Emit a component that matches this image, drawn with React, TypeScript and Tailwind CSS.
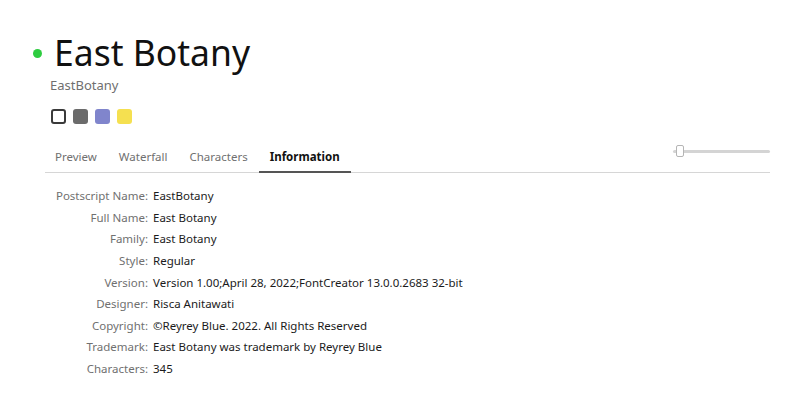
import { useState } from "react";

const info: [string, string][] = [
  ["Postscript Name", "EastBotany"],
  ["Full Name", "East Botany"],
  ["Family", "East Botany"],
  ["Style", "Regular"],
  ["Version", "Version 1.00;April 28, 2022;FontCreator 13.0.0.2683 32-bit"],
  ["Designer", "Risca Anitawati"],
  ["Copyright", "©Reyrey Blue. 2022. All Rights Reserved"],
  ["Trademark", "East Botany was trademark by Reyrey Blue"],
  ["Characters", "345"],
];

const tabs = ["Preview", "Waterfall", "Characters", "Information"];

const App = () => {
  const [currentTab, setCurrentTab] = useState<string>("Information");

  return (
    <div
      className="w-[800px] h-[416px] bg-white overflow-hidden text-[#1b1b1b]"
      style={{ fontFamily: '"Segoe UI", "Noto Sans", "Open Sans", sans-serif' }}
    >
      {/* Header */}
      <div className="pt-[30px] pl-[33px] flex items-center gap-[12px]">
        <div className="w-[9px] h-[9px] rounded-full bg-[#2ecc40] mt-[2px]" />
        <h1 className="text-[35.5px] leading-[44px] text-[#111]">East Botany</h1>
      </div>
      <div className="pl-[50px] mt-[2px] text-[13px] leading-[18px] text-[#6f6f6f]">EastBotany</div>

      {/* colour swatches */}
      <div className="pl-[51px] mt-[15px] flex gap-[7px]">
        <div className="w-[15px] h-[15px] rounded-[3px] border-2 border-[#3a3a3a] bg-white" />
        <div className="w-[15px] h-[15px] rounded-[3px] bg-[#6b6b6b]" />
        <div className="w-[15px] h-[15px] rounded-[3px] bg-[#8085cc]" />
        <div className="w-[15px] h-[15px] rounded-[3px] bg-[#f5e050]" />
      </div>

      {/* tabs */}
      <div className="ml-[45px] w-[725px] mt-[18px] border-b border-[#d6d6d6] flex items-center justify-between">
        <ul className="flex -ml-[1px]">
          {tabs.map((t) => (
            <li
              key={t}
              onClick={() => setCurrentTab(t)}
              className={`px-[11px] h-[31px] pt-[1px] flex items-center text-[11.5px] cursor-pointer border-b-2 -mb-[1px] ${
                currentTab === t ? "font-bold text-[#111] border-[#555]" : "text-[#707070] border-transparent"
              }`}
            >
              {t}
            </li>
          ))}
        </ul>
        <div className="relative w-[97px] h-[12px] mb-[13px]">
          <div className="absolute left-0 right-0 top-[5px] h-[3px] rounded-full bg-[#d4d4d4]" />
          <div className="absolute left-[3px] top-0 w-[8px] h-[12px] rounded-[2px] bg-white border border-[#b5b5b5]" />
        </div>
      </div>

      {/* information */}
      <div className="pl-[45px] pt-[12px] flex flex-col">
        {info.map(([k, v]) => (
          <div key={k} className="flex h-[21.6px] items-center text-[11.5px]">
            <div className="w-[103px] text-right text-[#707070]">{k}:</div>
            <div className="ml-[5px] text-[#1b1b1b]">{v}</div>
          </div>
        ))}
      </div>
    </div>
  );
};

export default App;
